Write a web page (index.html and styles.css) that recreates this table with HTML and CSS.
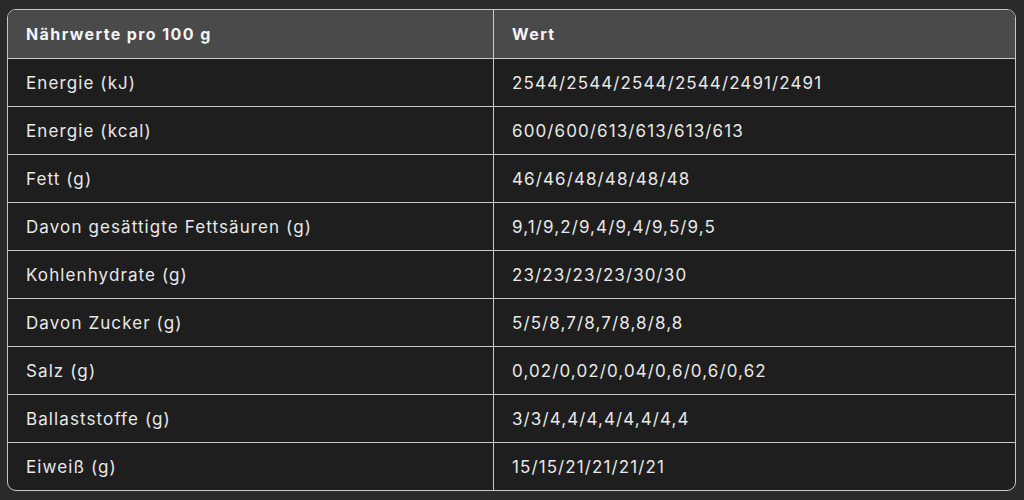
FILE: index.html
```html
<!DOCTYPE html>
<html lang="de">
<head>
<meta charset="utf-8">
<title>Nährwerte</title>
<link rel="stylesheet" href="styles.css">
</head>
<body>
<div class="wrap">
<table class="nutri">
<thead>
<tr><th>Nährwerte pro 100 g</th><th>Wert</th></tr>
</thead>
<tbody>
<tr><td>Energie (kJ)</td><td>2544/2544/2544/2544/2491/2491</td></tr>
<tr><td>Energie (kcal)</td><td>600/600/613/613/613/613</td></tr>
<tr><td>Fett (g)</td><td>46/46/48/48/48/48</td></tr>
<tr><td>Davon gesättigte Fettsäuren (g)</td><td>9,1/9,2/9,4/9,4/9,5/9,5</td></tr>
<tr><td>Kohlenhydrate (g)</td><td>23/23/23/23/30/30</td></tr>
<tr><td>Davon Zucker (g)</td><td>5/5/8,7/8,7/8,8/8,8</td></tr>
<tr><td>Salz (g)</td><td>0,02/0,02/0,04/0,6/0,6/0,62</td></tr>
<tr><td>Ballaststoffe (g)</td><td>3/3/4,4/4,4/4,4/4,4</td></tr>
<tr><td>Eiweiß (g)</td><td>15/15/21/21/21/21</td></tr>
</tbody>
</table>
</div>
</body>
</html>
```
FILE: styles.css
```css
html, body {
  margin: 0;
  padding: 0;
  background: #2a2a2a;
}
body {
  font-family: Inter, "Noto Sans", sans-serif;
  color: #e8e8e8;
}
.wrap {
  padding: 9px 8px 9px 7px;
}
.nutri {
  width: 100%;
  border-collapse: separate;
  border-spacing: 0;
  border: 1px solid #c8c8c8;
  border-radius: 9px;
  overflow: hidden;
  background: #1e1e1e;
  font-size: 17px;
  letter-spacing: 1.1px;
}
.nutri th, .nutri td {
  text-align: left;
  padding: 0 18px;
  box-sizing: border-box;
}
.nutri th {
  background: #4a4a4a;
  font-weight: 700;
  font-size: 16px;
  letter-spacing: 1.4px;
  color: #f4f4f4;
  height: 48px;
}
.nutri th:first-child, .nutri td:first-child {
  width: 486px;
  border-right: 1px solid #c8c8c8;
}
.nutri td {
  border-top: 1px solid #c8c8c8;
  height: 48px;
}
```
